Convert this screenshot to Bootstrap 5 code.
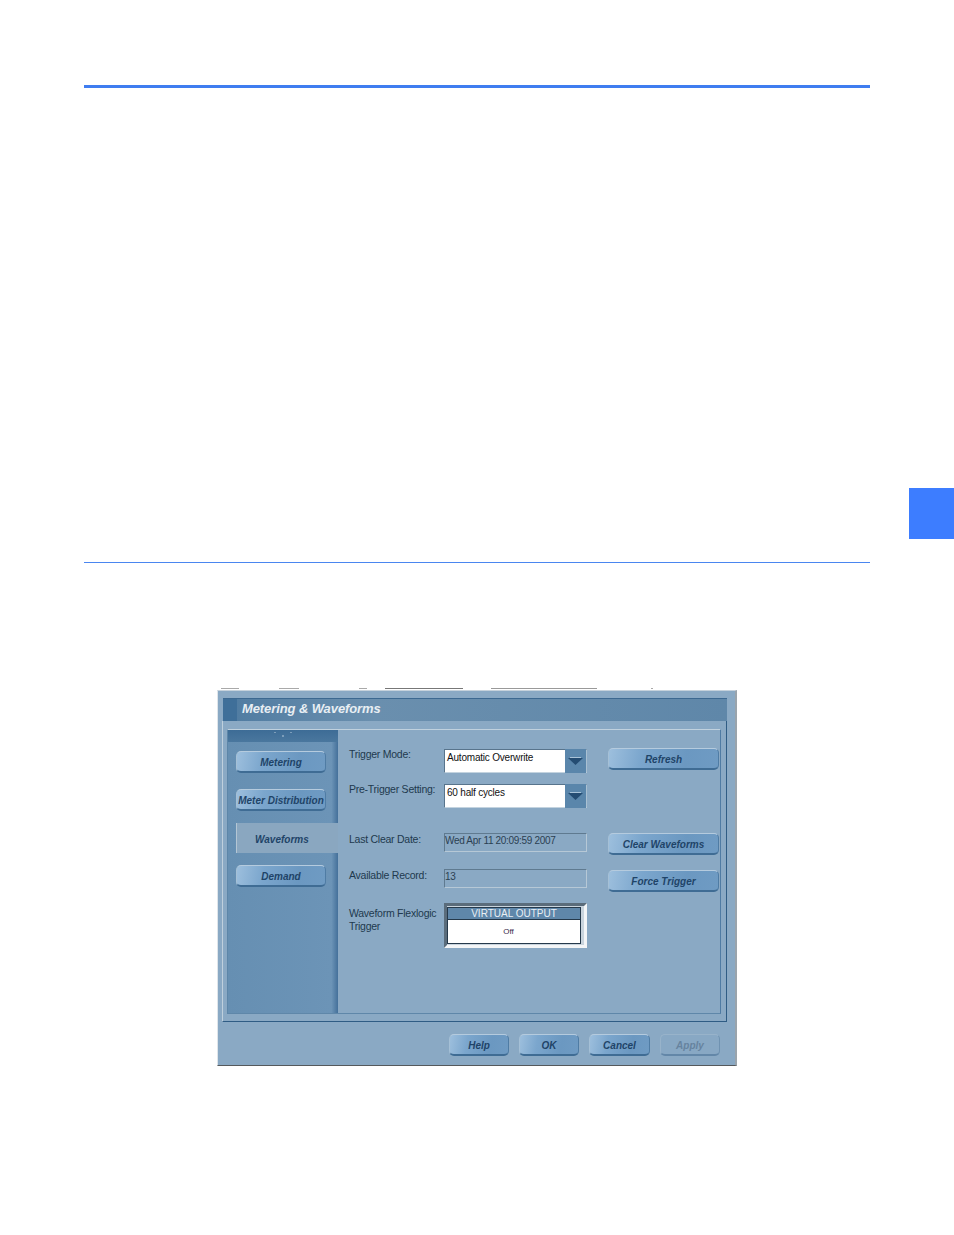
<!DOCTYPE html>
<html lang="en">
<head>
<meta charset="utf-8">
<title>Metering &amp; Waveforms</title>
<link href="https://cdn.jsdelivr.net/npm/bootstrap@5.3.0/dist/css/bootstrap.min.css" rel="stylesheet">
<style>
html,body{background:#fff;margin:0;height:1235px;overflow:hidden}
.sheet{position:relative;height:1235px;padding-top:85px;font-family:"Liberation Sans",Arial,sans-serif}
.rule-top{height:3px;background:#3f7df0;margin:0 84px}
.rule-mid{height:1px;background:#4a86f0;margin:474px 84px 0}
.side-tab{position:absolute;left:909px;top:488px;width:45px;height:51px;background:#3d7dff}
.scan-strip{width:520px;height:2px;margin:125px auto 0;padding-left:4px}
.scan-strip span{height:1px;background:#a9a9a9;display:block}
.scan-strip .strip-a{width:18px}
.scan-strip .strip-b{width:20px;margin-left:40px}
.scan-strip .strip-c{width:8px;margin-left:60px}
.scan-strip .strip-d{width:78px;margin-left:18px;background:#777}
.scan-strip .strip-e{width:106px;margin-left:28px;background:#999}
.scan-strip .strip-f{width:2px;margin-left:54px}
.dialog{width:520px;height:376px;margin:0 auto;background:#8aa9c4;border-style:solid;border-width:1px 2px 1px 1px;border-color:#c6d2dc #9aa4ac #55595c #dfe5ea;padding-top:7px}
.dlg-title{height:23px;margin:0 8px 0 5px;background:linear-gradient(90deg,#4f7ba1,#6a8fae 30%,#5f87a9);border-top:1px solid #3c6890;color:#e8eef3;font-weight:700;font-style:italic;font-size:13px;letter-spacing:-.1px;line-height:20px}
.dlg-title i{display:block;width:14px;height:22px;background:#3f6f99;margin-right:5px}
.dlg-frame{margin:0 8px 0 4px;height:301px;border-right:1px solid #2f5c84;border-bottom:1px solid #2f5c84;border-left:1px solid #bfd0dd;padding:8px 5px 7px 4px}
.dlg-inner{height:285px;border-top:1px solid #c0d1de;border-right:1px solid #4f7ba3;border-bottom:1px solid #5f87a9;border-left:1px solid #5d86a8}
.dlg-nav{width:110px;flex:none;background:linear-gradient(90deg,#668fb2,#6c94b7 94%,#44709a)}
.dlg-navhead{height:12px;background:linear-gradient(#3d6c96,#4a779e);margin-bottom:9px;text-align:center;line-height:0}
.pill{display:block;height:22px;padding:0;border-radius:5px;font-weight:700;font-style:italic;font-size:10px;line-height:21px;text-align:center;color:#1f4468;white-space:nowrap;background:linear-gradient(100deg,#9dbfdd 0,#7ba6cd 30%,#6b98c1 70%,#6f9bc3);border-style:solid;border-width:1px 1px 2px 1px;border-color:#b5cbde #4f7ca4 #3f6c94 #a5c0d6}
.pill.off{background:#88a8c4;color:#66839f;border-color:#98b3ca #6f92b1 #6387a8 #98b3ca}
.nav-pill{width:90px;margin-left:8px}
.nav-cur{height:30px;margin:12px 0 12px 8px;background:#8aa7c0;border-left:1px solid #b4c6d4;color:#1f4468;font-weight:700;font-style:italic;font-size:10px;line-height:33px;padding-left:18px}
.dlg-body{padding:18px 0 0 11px;font-size:10.5px;color:#21394e}
.fld-row{display:flex}
.row-a{height:36px}
.row-b{height:49px}
.row-c{height:36px}
.row-d{height:34px}
.fld-label{width:95px;flex:none;line-height:13px;letter-spacing:-.25px}
.lift{margin-top:-1px}
.fld-main{width:143px;flex:none}
.fld-btn{width:111px;margin-left:21px;flex:none}
.drop{margin-top:1px}
.pick{height:24px;display:flex;background:#fff;border-style:solid;border-width:1px;border-color:#58748c #a9c0d2 #c3d3df #58748c;color:#111;line-height:14px;padding-left:2px;font-size:10px;letter-spacing:-.2px}
.pick b{flex:1;font-weight:400;padding-top:1px}
.pick u{display:flex;align-items:center;justify-content:center;width:21px;background:#5a86ab;text-decoration:none;margin:-1px 0}
.readout{height:19px;border-style:solid;border-width:1px;border-color:#5f7a90 #b6c8d6 #b6c8d6 #5f7a90;line-height:14px;color:#2a3f52;letter-spacing:-.32px;white-space:nowrap;font-size:10px}
.vo-box{height:45px;border:3px solid;border-color:#5a6c7b #f3f5f7 #f3f5f7 #5a6c7b;padding:1px 3px 1px 0;background:#c9d4dd}
.vo-head{height:13px;background:#5f87aa;border:1px solid #25394b;color:#e9eff4;line-height:11px;font-size:10px;text-align:center}
.vo-cell{height:24px;background:#fff;color:#3a2a4a;font-size:8px;line-height:23px;text-align:center;padding-right:11px;border:1px solid #25394b;border-top:0}
.dlg-foot{gap:10px;padding:12px 15px 0 0}
.dlg-foot .pill{width:60px}
.dlg-foot .pill-wide{width:61px}
</style>
</head>
<body>
<div class="sheet">
  <div class="rule-top"></div>
  <div class="rule-mid"></div>
  <div class="side-tab"></div>
  <div class="scan-strip d-flex">
    <span class="strip-a"></span><span class="strip-b"></span><span class="strip-c"></span><span class="strip-d"></span><span class="strip-e"></span><span class="strip-f"></span>
  </div>
  <div class="dialog">
    <div class="dlg-title d-flex"><i></i><span>Metering &amp; Waveforms</span></div>
    <div class="dlg-frame">
      <div class="dlg-inner d-flex">
        <div class="dlg-nav">
          <div class="dlg-navhead"><svg width="24" height="8" viewBox="0 0 24 8"><g fill="#7c9dba"><rect x="3" y="2" width="2" height="1"/><rect x="11" y="5" width="2" height="2"/><rect x="19" y="2" width="2" height="1"/></g></svg></div>
          <div class="pill nav-pill">Metering</div>
          <div class="pill nav-pill mt-3">Meter Distribution</div>
          <div class="nav-cur">Waveforms</div>
          <div class="pill nav-pill">Demand</div>
        </div>
        <div class="dlg-body flex-grow-1">
          <div class="fld-row row-a">
            <div class="fld-label">Trigger Mode:</div>
            <div class="fld-main"><div class="pick drop"><b>Automatic Overwrite</b><u><svg width="15" height="9" viewBox="0 0 15 9"><path d="M0 1h15L7.5 8z" fill="#244c72"/><path d="M2 0h11v1H2z" fill="#a9c3d8"/></svg></u></div></div>
            <div class="fld-btn"><div class="pill">Refresh</div></div>
          </div>
          <div class="fld-row row-b">
            <div class="fld-label lift">Pre-Trigger Setting:</div>
            <div class="fld-main"><div class="pick"><b>60 half cycles</b><u><svg width="15" height="9" viewBox="0 0 15 9"><path d="M0 1h15L7.5 8z" fill="#244c72"/><path d="M2 0h11v1H2z" fill="#a9c3d8"/></svg></u></div></div>
          </div>
          <div class="fld-row row-c">
            <div class="fld-label">Last Clear Date:</div>
            <div class="fld-main"><div class="readout">Wed Apr 11 20:09:59 2007</div></div>
            <div class="fld-btn"><div class="pill">Clear Waveforms</div></div>
          </div>
          <div class="fld-row row-d">
            <div class="fld-label">Available Record:</div>
            <div class="fld-main"><div class="readout">13</div></div>
            <div class="fld-btn"><div class="pill drop">Force Trigger</div></div>
          </div>
          <div class="fld-row">
            <div class="fld-label pt-1">Waveform Flexlogic Trigger</div>
            <div class="fld-main"><div class="vo-box"><div class="vo-head">VIRTUAL OUTPUT</div><div class="vo-cell">Off</div></div></div>
          </div>
        </div>
      </div>
    </div>
    <div class="dlg-foot d-flex justify-content-end">
      <div class="pill">Help</div>
      <div class="pill">OK</div>
      <div class="pill pill-wide">Cancel</div>
      <div class="pill off">Apply</div>
    </div>
  </div>
</div>
<script src="https://cdn.jsdelivr.net/npm/bootstrap@5.3.0/dist/js/bootstrap.bundle.min.js"></script>
</body>
</html>
